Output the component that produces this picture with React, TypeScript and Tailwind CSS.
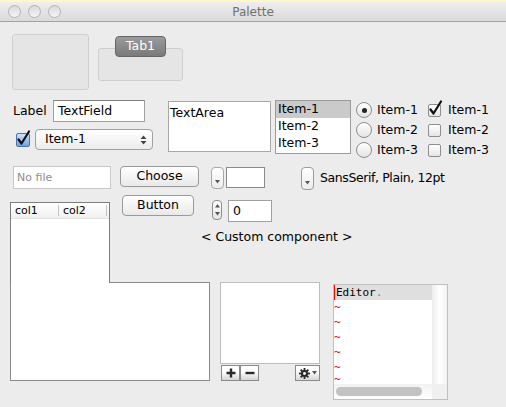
import React from "react";

function Circle() {
  return <div className="w-[13px] h-[13px] rounded-full border border-[#b3b3b3] bg-gradient-to-b from-[#d9d9d9] to-[#f5f5f5]" />;
}

function CheckMark({ className }: { className?: string }) {
  return (
    <svg className={className} width="16" height="18" viewBox="0 0 16 18">
      <path d="M3.5 10.5 L6.5 14.5 L14 2.5" fill="none" stroke="#111" strokeWidth="2.2" strokeLinecap="round" strokeLinejoin="round" />
    </svg>
  );
}

function Radio({ on }: { on?: boolean }) {
  return (
    <div className="w-[16px] h-[16px] rounded-full border border-[#8e8e8e] bg-gradient-to-b from-white to-[#e4e4e4] flex items-center justify-center">
      {on && <div className="w-[5px] h-[5px] rounded-full bg-[#222]" />}
    </div>
  );
}

function SmallCheck({ on }: { on?: boolean }) {
  return (
    <div className="relative w-[13px] h-[13px] rounded-[2px] border border-[#8e8e8e] bg-gradient-to-b from-white to-[#e6e6e6]">
      {on && <CheckMark className="absolute left-[-2px] top-[-6px]" />}
    </div>
  );
}

function DownTri() {
  return (
    <svg width="5" height="4" viewBox="0 0 5 4">
      <path d="M0 0 L5 0 L2.5 3.5 Z" fill="#555" />
    </svg>
  );
}

export default function App() {
  return (
    <div className="w-[506px] h-[407px] bg-[#ececec] overflow-hidden font-['DejaVu_Sans',sans-serif] text-[12.5px] text-black leading-none">
      <div className="h-[2px] bg-[#fdf9c4]" />
      <div className="h-[20px] border-b border-[#a3a3a3] bg-gradient-to-b from-[#eeeeee] to-[#dadada] grid grid-cols-[1fr_auto_1fr] items-center">
        <div className="flex gap-[7px] ml-[8px]">
          <Circle />
          <Circle />
          <Circle />
        </div>
        <div className="text-[#707070] text-[12px]">Palette</div>
        <div />
      </div>

      {/* Row A */}
      <div className="flex items-start mt-[12px]">
        <div className="ml-[12px] w-[77px] h-[56px] rounded-[3px] border border-[#d0d0d0] bg-[#e5e5e5]" />
        <div className="ml-[9px] mt-[2px] w-[85px] flex flex-col">
          <div className="relative z-10 ml-[17px] w-[51px] h-[21px] rounded-[4px] border border-[#666] bg-gradient-to-b from-[#9c9c9c] to-[#7a7a7a] text-white flex items-center justify-center">
            Tab1
          </div>
          <div className="-mt-[9px] h-[33px] rounded-[3px] border border-[#cfcfcf] bg-[#e5e5e5]" />
        </div>
      </div>

      {/* Row B */}
      <div className="flex items-start mt-[10px]">
        <div className="ml-[13px] w-[140px] flex flex-col">
          <div className="flex items-center h-[22px]">
            <span className="w-[40px]">Label</span>
            <div className="w-[92px] h-[22px] border border-[#a0a0a0] border-t-[#808080] bg-white flex items-center pl-[4px]">TextField</div>
          </div>
          <div className="flex items-center mt-[7px] h-[21px]">
            <div className="relative ml-[3px] w-[14px] h-[14px] rounded-[2px] border border-[#4d73ad] bg-gradient-to-b from-[#cfe4fa] to-[#6aa3e4]">
              <CheckMark className="absolute left-[-2px] top-[-5px]" />
            </div>
            <div className="ml-[5px] w-[118px] h-[21px] rounded-[4px] border border-[#a0a0a0] bg-gradient-to-b from-white to-[#ececec] flex items-center pl-[9px] pr-[5px] justify-between">
              <span>Item-1</span>
              <svg width="7" height="10" viewBox="0 0 7 10">
                <path d="M0.5 4 L3.5 0.5 L6.5 4 Z" fill="#444" />
                <path d="M0.5 6 L3.5 9.5 L6.5 6 Z" fill="#444" />
              </svg>
            </div>
          </div>
        </div>
        <div className="ml-[15px] mt-[1px] w-[103px] h-[51px] border border-[#a8a8a8] bg-white pl-[1px] pt-[5px]">TextArea</div>
        <div className="ml-[4px] w-[76px] h-[54px] border border-[#9b9b9b] bg-white flex flex-col">
          <div className="h-[17px] bg-[#cacaca] flex items-center pl-[2px]">Item-1</div>
          <div className="h-[17px] flex items-center pl-[2px]">Item-2</div>
          <div className="h-[17px] flex items-center pl-[2px]">Item-3</div>
        </div>
        <div className="ml-[5px] w-[71px] flex flex-col">
          {["Item-1", "Item-2", "Item-3"].map((t, i) => (
            <div key={t} className="h-[20px] flex items-center">
              <Radio on={i === 0} />
              <span className="ml-[5px]">{t}</span>
            </div>
          ))}
        </div>
        <div className="ml-[1px] flex flex-col">
          {["Item-1", "Item-2", "Item-3"].map((t, i) => (
            <div key={t} className="h-[20px] flex items-center">
              <SmallCheck on={i === 0} />
              <span className="ml-[7px]">{t}</span>
            </div>
          ))}
        </div>
      </div>

      {/* Row C */}
      <div className="flex items-start mt-[6px]">
        <div className="ml-[10px] w-[110px] flex flex-col">
          <div className="ml-[3px] w-[98px] h-[23px] border border-[#c8c8c8] bg-white flex items-center pl-[3px] text-[11px] text-[#8e8e8e]">No file</div>
          <div className="relative z-10 mt-[13px] w-[100px] h-[81px] border-t border-x border-[#7c7c7c] bg-white">
            <div className="h-[16px] flex bg-gradient-to-b from-white to-[#f0f0f0] border-b border-[#e2e2e2] text-[11px]">
              <div className="w-[48px] flex items-center pl-[4px] border-r border-[#c4c4c4] my-[2px]">col1</div>
              <div className="w-[48px] flex items-center pl-[4px] border-r border-[#c4c4c4] my-[2px]">col2</div>
            </div>
          </div>
        </div>
        <div className="w-[79px] flex flex-col">
          <div className="w-[79px] h-[21px] rounded-[4px] border border-[#9a9a9a] bg-gradient-to-b from-white to-[#e9e9e9] flex items-center justify-center">Choose</div>
          <div className="ml-[2px] mt-[8px] w-[72px] h-[21px] rounded-[4px] border border-[#9a9a9a] bg-gradient-to-b from-white to-[#e9e9e9] flex items-center justify-center">Button</div>
        </div>
        <div className="ml-[12px] w-[90px] flex flex-col">
          <div className="mt-[1px] flex items-start">
            <div className="w-[13px] h-[22px] rounded-[4px] border border-[#a8a8a8] bg-gradient-to-b from-white to-[#ececec] flex items-end justify-center pb-[4px]">
              <DownTri />
            </div>
            <div className="ml-[2px] w-[39px] h-[21px] border border-[#8a8a8a] bg-white" />
          </div>
          <div className="mt-[11px] flex items-start">
            <div className="ml-[1px] w-[10px] h-[20px] rounded-[4px] border border-[#8e8e8e] bg-gradient-to-b from-white to-[#e6e6e6] flex flex-col items-center justify-between py-[3px]">
              <svg width="5" height="4" viewBox="0 0 5 4"><path d="M0 3.5 L5 3.5 L2.5 0 Z" fill="#555" /></svg>
              <DownTri />
            </div>
            <div className="ml-[6px] w-[44px] h-[22px] border border-[#a0a0a0] bg-white flex items-center pl-[4px]">0</div>
          </div>
          <div className="mt-[8px] -ml-[10px] w-[150px] text-center leading-[14px] whitespace-nowrap">&lt; Custom component &gt;</div>
        </div>
        <div className="mt-[1px] flex items-center">
          <div className="w-[13px] h-[23px] rounded-[4px] border border-[#9a9a9a] bg-gradient-to-b from-white to-[#ececec] flex items-end justify-center pb-[4px]">
            <DownTri />
          </div>
          <span className="ml-[6px] tracking-[-0.4px]">SansSerif, Plain, 12pt</span>
        </div>
      </div>

      {/* Row D */}
      <div className="flex items-start -mt-[1px]">
        <div className="ml-[10px] w-[200px] h-[99px] border border-[#8a8a8a] bg-white" />
        <div className="ml-[10px] w-[100px] flex flex-col">
          <div className="h-[82px] border border-[#bdbdbd] bg-white" />
          <div className="mt-[1px] flex h-[16px]">
            <div className="ml-[1px] w-[19px] h-[16px] border border-[#8a8a8a] bg-gradient-to-b from-white from-40% to-[#d6d6d6] flex items-center justify-center">
              <svg width="10" height="10" viewBox="0 0 10 10"><path d="M5 0.5 V9.5 M0.5 5 H9.5" stroke="#2a2a2a" strokeWidth="2.4" /></svg>
            </div>
            <div className="w-[19px] h-[16px] border border-[#8a8a8a] bg-gradient-to-b from-white from-40% to-[#d6d6d6] flex items-center justify-center">
              <svg width="10" height="10" viewBox="0 0 10 10"><path d="M0.5 5 H9.5" stroke="#2a2a2a" strokeWidth="2.4" /></svg>
            </div>
            <div className="ml-auto w-[25px] h-[16px] border border-[#8a8a8a] bg-gradient-to-b from-white from-40% to-[#d6d6d6] flex items-center justify-center gap-[2px]">
              <svg width="11" height="11" viewBox="0 0 12 12">
                <g fill="#2a2a2a">
                  <circle cx="6" cy="6" r="3.8" />
                  <rect x="5" y="0" width="2" height="12" />
                  <rect x="0" y="5" width="12" height="2" />
                  <rect x="5" y="0" width="2" height="12" transform="rotate(45 6 6)" />
                  <rect x="5" y="0" width="2" height="12" transform="rotate(-45 6 6)" />
                </g>
                <circle cx="6" cy="6" r="1.6" fill="#fff" />
              </svg>
              <DownTri />
            </div>
          </div>
        </div>
        <div className="ml-[13px] mt-[2px] w-[115px] h-[116px] border border-[#bfbfbf] flex flex-col bg-white">
          <div className="flex h-[99px]">
            <div className="w-[98px] font-['DejaVu_Sans_Mono',monospace] text-[11px]">
              <div className="h-[15px] bg-[#dfdfdf] flex items-center">
                <div className="w-[1px] h-[15px] bg-[#ff0000]" />
                <span className="ml-[1px]">Editor</span>
                <span className="text-[#3a9aa0]">.</span>
              </div>
              {[0, 1, 2, 3, 4].map((i) => (
                <div key={i} className="h-[15px] leading-[15px] text-[#ee0000]">~</div>
              ))}
              <div className="h-[9px] leading-[9px] text-[#ee0000]">~</div>
            </div>
            <div className="w-[15px] bg-gradient-to-r from-[#ededed] via-white to-[#f2f2f2]" />
          </div>
          <div className="flex h-[15px]">
            <div className="w-[98px] bg-gradient-to-b from-[#f2f2f2] to-white flex items-center">
              <div className="ml-[2px] w-[86px] h-[9px] rounded-full bg-[#c2c2c2]" />
            </div>
            <div className="w-[15px] bg-[#f0f0f0]" />
          </div>
        </div>
      </div>
    </div>
  );
}
